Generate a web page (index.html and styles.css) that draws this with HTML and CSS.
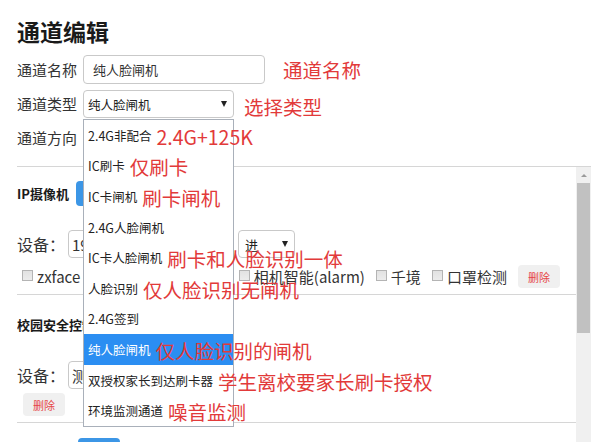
FILE: index.html
```html
<!DOCTYPE html>
<html lang="zh">
<head>
  <meta charset="UTF-8" />
  <meta name="viewport" content="width=device-width, initial-scale=1.0"/>
  <title>通道编辑</title>
  <link rel="stylesheet" href="styles.css">
</head>
<body>
  <h2 class="page-title">通道编辑</h2>

  <div class="form-row form-row-name">
    <label class="form-label">通道名称</label>
    <input class="text-input" type="text" value="纯人脸闸机" />
    <span class="note note-name">通道名称</span>
  </div>

  <div class="form-row">
    <label class="form-label">通道类型</label>
    <div class="select-box">
      <span>纯人脸闸机</span>
      <i class="arrow"></i>
      <ul class="dropdown">
        <li>2.4G非配合<span class="opt-note">2.4G+125K</span></li>
        <li>IC刷卡<span class="opt-note">仅刷卡</span></li>
        <li>IC卡闸机<span class="opt-note">刷卡闸机</span></li>
        <li>2.4G人脸闸机</li>
        <li>IC卡人脸闸机<span class="opt-note">刷卡和人脸识别一体</span></li>
        <li>人脸识别<span class="opt-note">仅人脸识别无闸机</span></li>
        <li>2.4G签到</li>
        <li class="selected">纯人脸闸机<span class="opt-note">仅人脸识别的闸机</span></li>
        <li>双授权家长到达刷卡器<span class="opt-note">学生离校要家长刷卡授权</span></li>
        <li>环境监测通道<span class="opt-note">噪音监测</span></li>
      </ul>
    </div>
    <span class="note note-type">选择类型</span>
  </div>

  <div class="form-row form-row-last">
    <label class="form-label">通道方向</label>
    <div class="select-box">
      <span>进</span>
      <i class="arrow"></i>
    </div>
  </div>

  <div class="panel">
    <div class="panel-body">
      <div class="device-group">
        <div class="group-head">
          <b>IP摄像机</b>
          <button class="btn-blue">添加</button>
        </div>
        <div class="device-row">
          <label class="device-label">设备：</label>
          <input class="device-input" type="text" value="192.168.1.64" />
          <div class="select-box select-small">
            <span>进</span>
            <i class="arrow"></i>
          </div>
        </div>
        <div class="check-row">
          <span class="check"><i class="box"></i>zxface</span>
          <span class="check"><i class="box"></i>海康威视人脸(hik)</span>
          <span class="check"><i class="box"></i>相机智能(alarm)</span>
          <span class="check"><i class="box"></i>千境</span>
          <span class="check"><i class="box"></i>口罩检测</span>
          <button class="btn-del">删除</button>
        </div>
      </div>

      <div class="device-group group-campus">
        <div class="group-head">
          <b>校园安全控制器</b>
          <button class="btn-blue">添加</button>
        </div>
        <div class="device-row">
          <label class="device-label">设备：</label>
          <input class="device-input" type="text" value="测温门" />
        </div>
        <div class="check-row">
          <button class="btn-del">删除</button>
        </div>
      </div>

      <div class="panel-footer">
        <button class="btn-blue">保存</button>
      </div>
    </div>
    <div class="scrollbar">
      <div class="sb-btn"><i class="sb-arrow"></i></div>
      <div class="sb-thumb"></div>
    </div>
  </div>
</body>
</html>
```

FILE: styles.css
```css
* {
  box-sizing: border-box;
}

body {
  margin: 0;
  padding: 0 9px 0 17px;
  font-family: "Noto Sans CJK SC", sans-serif;
  color: #333;
  background: #fff;
}

.page-title {
  margin: 16px 0 9px;
  font-size: 23px;
  line-height: 30px;
  font-weight: bold;
  color: #1a1a1a;
}

.form-row {
  display: flex;
  align-items: center;
  height: 28px;
  margin-bottom: 6px;
}

.form-row-name {
  height: 29px;
}

.form-row-last {
  margin-bottom: 14px;
}

.form-label {
  width: 66px;
  font-size: 15px;
  line-height: 20px;
  color: #333;
}

.text-input {
  width: 182px;
  height: 29px;
  padding: 0 9px;
  border: 1px solid #c9c9c9;
  border-radius: 4px;
  font-family: inherit;
  font-size: 13px;
  color: #333;
  outline: none;
}

.select-box {
  position: relative;
  display: flex;
  align-items: center;
  justify-content: space-between;
  width: 151px;
  height: 28px;
  padding: 0 6px 0 4px;
  border: 1px solid #c9c9c9;
  border-radius: 4px;
  font-size: 12.5px;
  color: #222;
  background: #fff;
}

.arrow {
  width: 0;
  height: 0;
  border-left: 3px solid transparent;
  border-right: 3px solid transparent;
  border-top: 6px solid #222;
}

.note {
  color: #e23a3a;
  font-size: 19.5px;
  line-height: 24px;
}

.note-name {
  margin-left: 18px;
}

.note-type {
  margin-left: 10px;
  margin-top: 6px;
}

.dropdown {
  position: absolute;
  top: 28px;
  left: -1px;
  z-index: 10;
  width: 151px;
  margin: 0;
  padding: 0;
  list-style: none;
  background: #fff;
  border: 1px solid #a9b0ba;
}

.dropdown li {
  display: flex;
  align-items: center;
  height: 30.6px;
  padding-left: 4px;
  white-space: nowrap;
  font-size: 12.5px;
  color: #222;
}

.dropdown li.selected {
  background: #2b8ef2;
  color: #fff;
}

.opt-note {
  margin-left: 5px;
  margin-top: 3px;
  color: #e23a3a;
  font-size: 19.5px;
  line-height: 24px;
}

.panel {
  display: flex;
  height: 276px;
  border-top: 1px solid #d6d6d6;
  overflow: hidden;
}

.panel-body {
  flex: 1;
}

.scrollbar {
  width: 15px;
  background: #f0f0f0;
}

.sb-btn {
  display: flex;
  align-items: center;
  justify-content: center;
  height: 16px;
}

.sb-arrow {
  width: 0;
  height: 0;
  border-left: 3px solid transparent;
  border-right: 3px solid transparent;
  border-bottom: 3px solid #9a9a9a;
}

.sb-thumb {
  height: 150px;
  margin: 0 1px;
  background: #c1c1c1;
}

.device-group {
  padding: 14px 0 6px;
  border-bottom: 1px solid #d6d6d6;
}

.group-campus {
  padding-top: 17px;
}

.group-head {
  display: flex;
  align-items: center;
  gap: 7px;
  height: 25px;
  font-size: 13px;
  color: #1a1a1a;
}

.btn-blue {
  width: 42px;
  height: 25px;
  padding: 0;
  border: none;
  border-radius: 4px;
  background: #3c96e6;
  color: #fff;
  font-family: inherit;
  font-size: 12px;
}

.device-row {
  display: flex;
  align-items: center;
  height: 28px;
  margin-top: 24px;
}

.device-label {
  width: 51px;
  font-size: 16px;
  color: #333;
}

.device-input {
  width: 164px;
  height: 28px;
  padding: 0 3px;
  border: 1px solid #c9c9c9;
  border-radius: 4px;
  font-family: inherit;
  font-size: 15px;
  color: #333;
}

.select-small {
  width: 57px;
  margin-left: 6px;
  padding: 0 6px;
  font-size: 13px;
}

.check-row {
  display: flex;
  align-items: center;
  height: 23px;
  margin-top: 7px;
  padding-left: 5px;
  font-size: 15px;
  color: #333;
}

.group-campus .check-row {
  margin-top: 4px;
}

.check {
  display: flex;
  align-items: center;
  margin-right: 11px;
  white-space: nowrap;
}

.box {
  width: 11px;
  height: 11px;
  margin-right: 4px;
  margin-top: -2px;
  border: 1px solid #b4b4b4;
  background: linear-gradient(#e2e2e2, #ececec);
}

.btn-del {
  width: 42px;
  height: 23px;
  margin-left: 0;
  padding: 0;
  border: none;
  border-radius: 4px;
  background: #f0f0f0;
  color: #e64545;
  font-family: inherit;
  font-size: 11px;
}

.group-campus .btn-del {
  margin-left: 1px;
}

.panel-footer {
  padding: 14px 0 0 61px;
}
```
